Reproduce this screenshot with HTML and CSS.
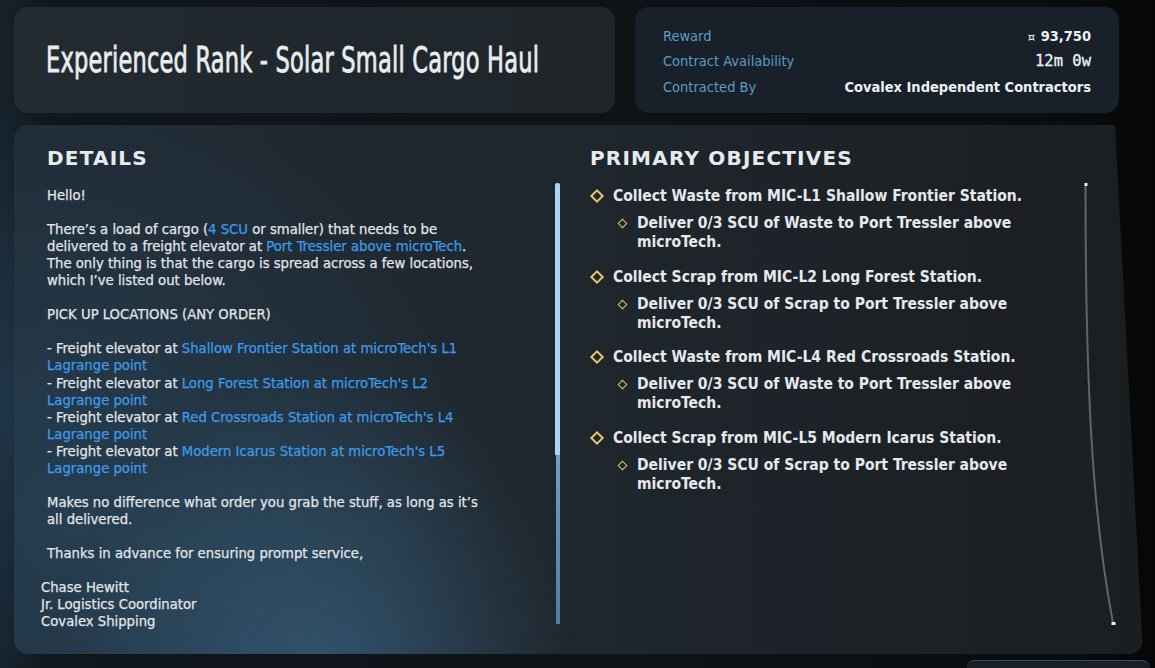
FILE: index.html
```html
<!DOCTYPE html>
<html lang="en">
<head>
<meta charset="utf-8">
<title>Contract</title>
<link rel="stylesheet" href="styles.css">
</head>
<body>
<div class="page">
  <div class="top">
    <div class="title-card">
      <h1 class="title"><span class="title-text">Experienced Rank - Solar Small Cargo Haul</span></h1>
    </div>
    <div class="info-card">
      <div class="info-row"><span class="label">Reward</span><span class="value"><span class="cur">¤</span> 93,750</span></div>
      <div class="info-row"><span class="label">Contract Availability</span><span class="value mono">12m 0w</span></div>
      <div class="info-row"><span class="label">Contracted By</span><span class="value">Covalex Independent Contractors</span></div>
    </div>
  </div>

  <div class="panel">
    <section class="details">
      <h2 class="heading">DETAILS</h2>
      <div class="letter">
        <p>Hello!</p>
        <p>There’s a load of cargo (<span class="link">4 SCU</span> or smaller) that needs to be<br>delivered to a freight elevator at <span class="link">Port Tressler above microTech</span>.<br>The only thing is that the cargo is spread across a few locations,<br>which I’ve listed out below.</p>
        <p>PICK UP LOCATIONS (ANY ORDER)</p>
        <p>- Freight elevator at <span class="link">Shallow Frontier Station at microTech's L1<br>Lagrange point</span><br>- Freight elevator at <span class="link">Long Forest Station at microTech's L2<br>Lagrange point</span><br>- Freight elevator at <span class="link">Red Crossroads Station at microTech's L4<br>Lagrange point</span><br>- Freight elevator at <span class="link">Modern Icarus Station at microTech's L5<br>Lagrange point</span></p>
        <p>Makes no difference what order you grab the stuff, as long as it’s<br>all delivered.</p>
        <p>Thanks in advance for ensuring prompt service,</p>
        <p class="sign">Chase Hewitt<br>Jr. Logistics Coordinator<br>Covalex Shipping</p>
      </div>
    </section>

    <div class="scroll-left"><div class="thumb"></div><div class="track"></div></div>

    <section class="objectives">
      <h2 class="heading">PRIMARY OBJECTIVES</h2>
      <ul class="obj-list">
        <li class="obj">
          <div class="main"><i class="dia"></i><span>Collect Waste from MIC-L1 Shallow Frontier Station.</span></div>
          <div class="sub"><i class="dia small"></i><span>Deliver 0/3 SCU of Waste to Port Tressler above<br>microTech.</span></div>
        </li>
        <li class="obj">
          <div class="main"><i class="dia"></i><span>Collect Scrap from MIC-L2 Long Forest Station.</span></div>
          <div class="sub"><i class="dia small"></i><span>Deliver 0/3 SCU of Scrap to Port Tressler above<br>microTech.</span></div>
        </li>
        <li class="obj">
          <div class="main"><i class="dia"></i><span>Collect Waste from MIC-L4 Red Crossroads Station.</span></div>
          <div class="sub"><i class="dia small"></i><span>Deliver 0/3 SCU of Waste to Port Tressler above<br>microTech.</span></div>
        </li>
        <li class="obj">
          <div class="main"><i class="dia"></i><span>Collect Scrap from MIC-L5 Modern Icarus Station.</span></div>
          <div class="sub"><i class="dia small"></i><span>Deliver 0/3 SCU of Scrap to Port Tressler above<br>microTech.</span></div>
        </li>
      </ul>
    </section>

    <svg class="scroll-right" width="32" height="444" viewBox="0 0 32 444">
      <path d="M1.5 2 C 1.5 200, 8 330, 29 440" fill="none" stroke="#5d656b" stroke-width="2"/>
      <rect x="0.5" y="0" width="3" height="3" fill="#e8eef2"/>
      <rect x="27.5" y="439" width="4" height="3" fill="#e8eef2"/>
    </svg>
  </div>

  <div class="bottom">
    <div class="bottom-card"></div>
  </div>
</div>
</body>
</html>
```

FILE: styles.css
```css
* { box-sizing: border-box; }

html, body {
  margin: 0;
  padding: 0;
  height: 668px;
  overflow: hidden;
}

body {
  background:
    radial-gradient(ellipse 120px 300px at 0% 60%, rgba(40, 70, 95, 0.55), transparent 100%),
    linear-gradient(90deg, #16222c 0, #10171d 4%, #0e1317 50%, #0a0d10 92%, #050607 100%);
  font-family: "DejaVu Sans Condensed", "DejaVu Sans", sans-serif;
  color: #e4e7ea;
}

.page {
  padding: 7px 0 0 14px;
}

/* ---------- top row ---------- */
.top {
  display: flex;
  gap: 20px;
  height: 106px;
}

.title-card {
  width: 601px;
  border-radius: 14px;
  background: linear-gradient(90deg, #232b31 0%, #20272c 60%, #1f2529 100%);
  display: flex;
  align-items: center;
  padding-left: 32px;
}

.title {
  margin: 0;
  font-weight: normal;
  font-size: 36px;
  line-height: 40px;
  color: #e8ecef;
  white-space: nowrap;
}

.title-text {
  display: inline-block;
  transform: scaleX(0.695);
  transform-origin: 0 50%;
  -webkit-text-stroke: 0.8px #e8ecef;
  letter-spacing: 0.3px;
}

.info-card {
  width: 484px;
  border-radius: 14px;
  background: #18212a;
  padding: 16px 28px 0 28px;
}

.info-row {
  display: flex;
  justify-content: space-between;
  align-items: center;
  height: 25.5px;
  font-size: 14.5px;
}

.label {
  color: #5b9cc4;
}

.value {
  color: #eef1f3;
  font-weight: bold;
}

.value.mono {
  font-family: "DejaVu Sans Mono", monospace;
  font-weight: normal;
  font-size: 15.5px;
  -webkit-text-stroke: 0.3px #eef1f3;
}

.cur {
  font-weight: normal;
  font-size: 13px;
  margin-right: 1px;
}

/* ---------- main panel ---------- */
.panel {
  margin-top: 12px;
  width: 1129px;
  height: 529px;
  border-radius: 14px;
  display: flex;
  padding: 21px 0 0 33px;
  clip-path: polygon(0 0, 1101px 0, 100% 100%, 0 100%);
  background:
    radial-gradient(ellipse 260px 330px at 27% 108%, rgba(70, 130, 175, 0.45), transparent 100%),
    radial-gradient(ellipse 420px 420px at 6% 75%, rgba(45, 85, 115, 0.45), transparent 100%),
    linear-gradient(90deg, #202c36 0%, #1f272e 45%, #1d2227 75%, #1b1e21 100%);
  overflow: hidden;
}

.heading {
  margin: 0;
  font-family: "DejaVu Sans", sans-serif;
  font-weight: bold;
  font-size: 20px;
  line-height: 24px;
  letter-spacing: 1.2px;
  color: #e8ebee;
}

.details {
  width: 508px;
  flex: none;
}

.letter {
  margin: 16px 0 0 -8px;
  padding-left: 8px;
  height: 444px;
  overflow: hidden;
  font-size: 14.7px;
  line-height: 17.05px;
  color: #e2e5e8;
  -webkit-text-stroke: 0.25px #e2e5e8;
}

.letter p {
  margin: 0 0 17.05px;
}

.letter .sign {
  margin-left: -6px;
}

.link {
  color: #3f9ae8;
  -webkit-text-stroke: 0.25px #3f9ae8;
}

.scroll-left {
  flex: none;
  width: 5px;
  margin-top: 37px;
  height: 441px;
  display: flex;
  flex-direction: column;
  align-items: flex-start;
}

.scroll-left .thumb {
  width: 5px;
  height: 272px;
  background: #a9d5f3;
  border-radius: 2px 2px 0 0;
}

.scroll-left .track {
  width: 4px;
  margin-left: 1px;
  flex: 1;
  background: linear-gradient(180deg, #6d9fc2, #4b7fa2);
}

.objectives {
  flex: none;
  width: 494px;
  margin-left: 30px;
}

.obj-list {
  list-style: none;
  margin: 17px 0 0;
  padding: 0;
  font-size: 15.5px;
  font-weight: bold;
  line-height: 19px;
  color: #e6e9ec;
}

.obj {
  margin-bottom: 15.5px;
}

.main, .sub {
  display: flex;
  align-items: flex-start;
}

.sub {
  margin-top: 8px;
  padding-left: 29px;
}

.dia {
  flex: none;
  display: block;
  width: 10px;
  height: 10px;
  margin: 4px 11px 0 2px;
  border: 2px solid #e4c66b;
  transform: rotate(45deg);
}

.dia.small {
  width: 7px;
  height: 7px;
  margin: 6px 11px 0 0;
  border-width: 1.6px;
}

.scroll-right {
  flex: none;
  margin-top: 37px;
  display: block;
}

.bottom {
  display: flex;
  justify-content: flex-end;
  padding-right: 5px;
  margin-top: 6px;
}

.bottom-card {
  width: 183px;
  height: 20px;
  border-radius: 8px 8px 0 0;
  border-top: 1px solid #3b4d5a;
  background: #172027;
}
```
